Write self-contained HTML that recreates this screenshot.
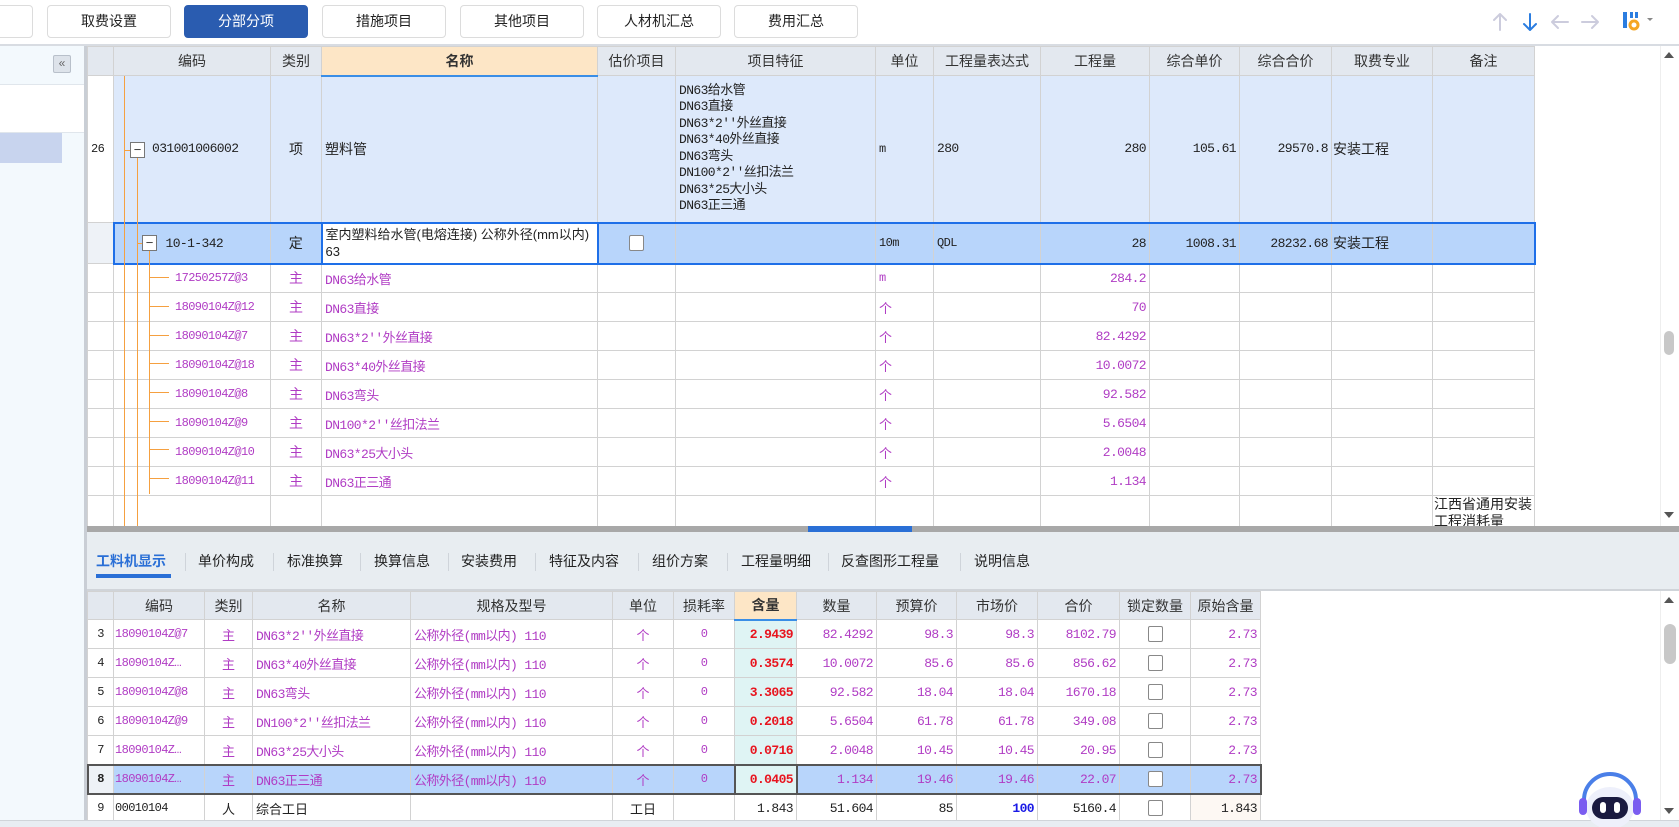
<!DOCTYPE html>
<html><head><meta charset="utf-8"><style>
*{box-sizing:border-box;margin:0;padding:0}
body{width:1679px;height:827px;overflow:hidden;background:#fff;font-family:"Liberation Sans","Noto Sans CJK SC",sans-serif;font-size:13px;color:#222;position:relative}
.abs{position:absolute}
.btn{position:absolute;top:5px;height:33px;border:1px solid #dcdcdc;border-radius:4px;background:#fff;text-align:center;line-height:31px;font-size:14px;color:#222}
.btn.on{background:#2a5cb0;color:#fff;border-color:#2a5cb0}
table{border-collapse:collapse;table-layout:fixed;position:absolute}
td,th{border:1px solid #d2d2d2;overflow:hidden;white-space:nowrap;font-weight:normal;padding:0 3px}
th{background:#e3e8ef;font-size:14px;text-align:center;color:#333}
.m{font-family:"Liberation Mono","Noto Sans CJK SC",monospace;font-size:12px;letter-spacing:-0.6px}
.r{text-align:right}.c{text-align:center}
.p{color:#b03cc4}
.t1 td{height:29px}
.tab{position:absolute;top:551px;font-size:14px;color:#222}
.sep{position:absolute;top:553px;width:1px;height:18px;background:#cfd4da}
.cb{display:inline-block;width:15px;height:16px;border:1px solid #888;border-radius:2px;background:#fff;vertical-align:middle}
.cc{padding-left:61px}
</style></head><body>
<div class="btn" style="left:-10px;width:43px"></div>
<div class="btn" style="left:47px;width:124px">取费设置</div>
<div class="btn on" style="left:184px;width:124px">分部分项</div>
<div class="btn" style="left:322px;width:124px">措施项目</div>
<div class="btn" style="left:460px;width:124px">其他项目</div>
<div class="btn" style="left:597px;width:124px">人材机汇总</div>
<div class="btn" style="left:734px;width:124px">费用汇总</div>
<svg class="abs" style="left:1490px;top:8px" width="180" height="28" viewBox="0 0 180 28">
<g fill="none" stroke-width="2" stroke-linecap="round" stroke-linejoin="round">
<path d="M10 6v16M4 12l6-6 6 6" stroke="#ccd"/>
<path d="M40 6v16M34 16l6 6 6-6" stroke="#2b7de0"/>
<path d="M62 14h16M68 8l-6 6 6 6" stroke="#ccd"/>
<path d="M92 14h16M102 8l6 6-6 6" stroke="#ccd"/>
</g>
<rect x="133" y="4" width="4" height="16" fill="#2b7de0"/><rect x="140" y="4" width="3" height="6" fill="#2b7de0"/><rect x="145" y="4" width="3" height="6" fill="#2b7de0"/>
<circle cx="144" cy="17" r="4" fill="none" stroke="#f5a623" stroke-width="3"/>
<path d="M157 10l3 3 3-3z" fill="#888"/>
</svg>
<div class="abs" style="left:0;top:44px;width:1679px;height:2px;background:#d8dce2"></div>
<div class="abs" style="left:0;top:46px;width:84px;height:780px;background:#f3f9fd"></div>
<div class="abs" style="left:0;top:84px;width:84px;height:49px;background:#fff;border-top:1px solid #e0e6ec;border-bottom:1px solid #e0e6ec"></div>
<div class="abs" style="left:0;top:133px;width:62px;height:30px;background:#c8d4ee"></div>
<div class="abs" style="left:53px;top:55px;width:18px;height:18px;background:#dde3ea;border:1px solid #b8c0ca;border-radius:2px;font-size:12px;line-height:15px;text-align:center;color:#666">«</div>
<div class="abs" style="left:84px;top:46px;width:3px;height:780px;background:#c9ced5"></div>
<div class="abs" style="left:87px;top:46px;width:1573px;height:480px;overflow:hidden">
<table style="left:0;top:0;width:1447px" class="t1">
<colgroup><col style="width:26px"><col style="width:157px"><col style="width:51px"><col style="width:276px"><col style="width:78px"><col style="width:200px"><col style="width:58px"><col style="width:107px"><col style="width:109px"><col style="width:90px"><col style="width:92px"><col style="width:101px"><col style="width:102px"></colgroup>
<tr style="height:29px"><th></th><th>编码</th><th>类别</th><th style="background:#fde6c6;border-bottom:2px solid #3a8ee6;font-weight:bold">名称</th><th>估价项目</th><th>项目特征</th><th>单位</th><th>工程量表达式</th><th>工程量</th><th>综合单价</th><th>综合合价</th><th>取费专业</th><th>备注</th></tr>
<tr style="background:#dde9fb"><td style="height:147px;background:#fff" class="m">26</td><td class="m" style="padding-left:38px;font-size:13px">031001006002</td><td class="c" style="font-size:14px">项</td><td style="font-size:14px">塑料管</td><td></td><td class="m" style="line-height:16.5px;white-space:normal;font-size:13px">DN63给水管<br>DN63直接<br>DN63*2''外丝直接<br>DN63*40外丝直接<br>DN63弯头<br>DN100*2''丝扣法兰<br>DN63*25大小头<br>DN63正三通</td><td class="m">m</td><td class="m" style="font-size:13px">280</td><td class="m r" style="font-size:13px">280</td><td class="m r" style="font-size:13px">105.61</td><td class="m r" style="font-size:13px">29570.8</td><td style="font-size:14px;padding-left:1px">安装工程</td><td></td></tr>
<tr style="background:#b8d5fb"><td style="height:41px;background:#eef2f7"></td><td class="m" style="padding-left:51px;font-size:13px;border-left:2px solid #1e6fe8;border-top:2px solid #1e6fe8;border-bottom:2px solid #1e6fe8">10-1-342</td><td class="c" style="font-size:14px;border-top:2px solid #1e6fe8;border-bottom:2px solid #1e6fe8">定</td><td style="background:#fff;white-space:normal;word-break:break-all;line-height:17px;font-size:13px;border:2px solid #1e6fe8">室内塑料给水管(电熔连接) 公称外径(mm以内) 63</td><td class="c" style="border-top:2px solid #1e6fe8;border-bottom:2px solid #1e6fe8"><span class="cb"></span></td><td style="border-top:2px solid #1e6fe8;border-bottom:2px solid #1e6fe8"></td><td class="m" style="border-top:2px solid #1e6fe8;border-bottom:2px solid #1e6fe8">10m</td><td class="m" style="border-top:2px solid #1e6fe8;border-bottom:2px solid #1e6fe8">QDL</td><td class="m r" style="font-size:13px;border-top:2px solid #1e6fe8;border-bottom:2px solid #1e6fe8">28</td><td class="m r" style="font-size:13px;border-top:2px solid #1e6fe8;border-bottom:2px solid #1e6fe8">1008.31</td><td class="m r" style="font-size:13px;border-top:2px solid #1e6fe8;border-bottom:2px solid #1e6fe8">28232.68</td><td style="font-size:14px;padding-left:1px;border-top:2px solid #1e6fe8;border-bottom:2px solid #1e6fe8">安装工程</td><td style="border:2px solid #1e6fe8;border-left:1px solid #d2d2d2"></td></tr>
<tr class="p"><td></td><td class="m cc">17250257Z@3</td><td class="c" style="font-size:14px">主</td><td class="m" style="font-size:13px">DN63给水管</td><td></td><td></td><td class="m">m</td><td></td><td class="m r" style="font-size:13px">284.2</td><td></td><td></td><td></td><td></td></tr>
<tr class="p"><td></td><td class="m cc">18090104Z@12</td><td class="c" style="font-size:14px">主</td><td class="m" style="font-size:13px">DN63直接</td><td></td><td></td><td>个</td><td></td><td class="m r" style="font-size:13px">70</td><td></td><td></td><td></td><td></td></tr>
<tr class="p"><td></td><td class="m cc">18090104Z@7</td><td class="c" style="font-size:14px">主</td><td class="m" style="font-size:13px">DN63*2''外丝直接</td><td></td><td></td><td>个</td><td></td><td class="m r" style="font-size:13px">82.4292</td><td></td><td></td><td></td><td></td></tr>
<tr class="p"><td></td><td class="m cc">18090104Z@18</td><td class="c" style="font-size:14px">主</td><td class="m" style="font-size:13px">DN63*40外丝直接</td><td></td><td></td><td>个</td><td></td><td class="m r" style="font-size:13px">10.0072</td><td></td><td></td><td></td><td></td></tr>
<tr class="p"><td></td><td class="m cc">18090104Z@8</td><td class="c" style="font-size:14px">主</td><td class="m" style="font-size:13px">DN63弯头</td><td></td><td></td><td>个</td><td></td><td class="m r" style="font-size:13px">92.582</td><td></td><td></td><td></td><td></td></tr>
<tr class="p"><td></td><td class="m cc">18090104Z@9</td><td class="c" style="font-size:14px">主</td><td class="m" style="font-size:13px">DN100*2''丝扣法兰</td><td></td><td></td><td>个</td><td></td><td class="m r" style="font-size:13px">5.6504</td><td></td><td></td><td></td><td></td></tr>
<tr class="p"><td></td><td class="m cc">18090104Z@10</td><td class="c" style="font-size:14px">主</td><td class="m" style="font-size:13px">DN63*25大小头</td><td></td><td></td><td>个</td><td></td><td class="m r" style="font-size:13px">2.0048</td><td></td><td></td><td></td><td></td></tr>
<tr class="p"><td></td><td class="m cc">18090104Z@11</td><td class="c" style="font-size:14px">主</td><td class="m" style="font-size:13px">DN63正三通</td><td></td><td></td><td>个</td><td></td><td class="m r" style="font-size:13px">1.134</td><td></td><td></td><td></td><td></td></tr>
<tr><td style="height:40px"></td><td></td><td></td><td></td><td></td><td></td><td></td><td></td><td></td><td></td><td></td><td></td><td style="white-space:normal;line-height:17px;font-size:14px;vertical-align:top;padding:0 1px">江西省通用安装工程消耗量</td></tr>
</table>
<div class="abs" style="left:37px;top:30px;width:1px;height:450px;background:#f5a040"></div>
<div class="abs" style="left:37px;top:104px;width:8px;height:1px;background:#f5a040"></div>
<div class="abs" style="left:50px;top:110px;width:1px;height:370px;background:#f5a040"></div>
<div class="abs" style="left:50px;top:197px;width:6px;height:1px;background:#f5a040"></div>
<div class="abs" style="left:62px;top:204px;width:1px;height:244px;background:#f5a040"></div>
<div class="abs" style="left:43px;top:96px;width:15px;height:16px;border:1px solid #777;background:#fff;font-size:13px;line-height:13px;text-align:center;color:#333">−</div>
<div class="abs" style="left:55px;top:189px;width:15px;height:16px;border:1px solid #777;background:#fff;font-size:13px;line-height:13px;text-align:center;color:#333">−</div>
<div class="abs" style="left:62px;top:231px;width:20px;height:1px;background:#f5a040;box-shadow:0 29px #f5a040,0 58px #f5a040,0 86px #f5a040,0 115px #f5a040,0 144px #f5a040,0 172px #f5a040,0 201px #f5a040"></div>
</div>
<div class="abs" style="left:1660px;top:46px;width:19px;height:480px;background:#fff;border-left:1px solid #eee"></div>
<div class="abs" style="left:1664px;top:52px;width:0;height:0;border:5px solid transparent;border-bottom:6px solid #555;border-top:0"></div>
<div class="abs" style="left:1664px;top:512px;width:0;height:0;border:5px solid transparent;border-top:6px solid #555;border-bottom:0"></div>
<div class="abs" style="left:1664px;top:331px;width:10px;height:24px;background:#c8c8c8;border-radius:5px"></div>
<div class="abs" style="left:87px;top:526px;width:1592px;height:6px;background:#a8a8a8"></div>
<div class="abs" style="left:808px;top:526px;width:104px;height:6px;background:#2a6fd6"></div>
<div class="abs" style="left:87px;top:532px;width:1592px;height:58px;background:#e8edf1"></div>
<div class="tab" style="left:96px;color:#2a6fd6;font-weight:bold">工料机显示</div>
<div class="abs" style="left:96px;top:574px;width:75px;height:4px;background:#2a6fd6"></div>
<div class="sep" style="left:185px"></div><div class="tab" style="left:198px">单价构成</div>
<div class="sep" style="left:273px"></div><div class="tab" style="left:287px">标准换算</div>
<div class="sep" style="left:360px"></div><div class="tab" style="left:374px">换算信息</div>
<div class="sep" style="left:448px"></div><div class="tab" style="left:461px">安装费用</div>
<div class="sep" style="left:535px"></div><div class="tab" style="left:549px">特征及内容</div>
<div class="sep" style="left:638px"></div><div class="tab" style="left:652px">组价方案</div>
<div class="sep" style="left:727px"></div><div class="tab" style="left:741px">工程量明细</div>
<div class="sep" style="left:828px"></div><div class="tab" style="left:841px">反查图形工程量</div>
<div class="sep" style="left:960px"></div><div class="tab" style="left:974px">说明信息</div>
<div class="abs" style="left:87px;top:589px;width:1592px;height:2px;background:#d0d4d9"></div>
<div class="abs" style="left:87px;top:591px;width:1573px;height:230px;overflow:hidden">
<table style="left:0;top:0;width:1173px" class="t1">
<colgroup><col style="width:26px"><col style="width:91px"><col style="width:48px"><col style="width:158px"><col style="width:202px"><col style="width:61px"><col style="width:61px"><col style="width:62px"><col style="width:80px"><col style="width:80px"><col style="width:81px"><col style="width:82px"><col style="width:71px"><col style="width:70px"></colgroup>
<tr style="height:28px"><th></th><th>编码</th><th>类别</th><th>名称</th><th>规格及型号</th><th>单位</th><th>损耗率</th><th style="background:#fde6c6;border-bottom:2px solid #3a8ee6;font-weight:bold">含量</th><th>数量</th><th>预算价</th><th>市场价</th><th>合价</th><th>锁定数量</th><th>原始含量</th></tr>
<tr class="p"><td class="m c" style="color:#222">3</td><td class="m" style="padding:0 1px">18090104Z@7</td><td class="c">主</td><td class="m" style="font-size:13px">DN63*2''外丝直接</td><td class="m" style="font-size:13px">公称外径(mm以内) 110</td><td class="c">个</td><td class="c m">0</td><td class="m r" style="background:#dff4f4;color:#e8141e;font-weight:bold;font-size:13px">2.9439</td><td class="m r" style="font-size:13px">82.4292</td><td class="m r" style="font-size:13px">98.3</td><td class="m r" style="font-size:13px">98.3</td><td class="m r" style="font-size:13px">8102.79</td><td class="c"><span class="cb"></span></td><td class="m r" style="font-size:13px">2.73</td></tr>
<tr class="p"><td class="m c" style="color:#222">4</td><td class="m" style="padding:0 1px">18090104Z…</td><td class="c">主</td><td class="m" style="font-size:13px">DN63*40外丝直接</td><td class="m" style="font-size:13px">公称外径(mm以内) 110</td><td class="c">个</td><td class="c m">0</td><td class="m r" style="background:#dff4f4;color:#e8141e;font-weight:bold;font-size:13px">0.3574</td><td class="m r" style="font-size:13px">10.0072</td><td class="m r" style="font-size:13px">85.6</td><td class="m r" style="font-size:13px">85.6</td><td class="m r" style="font-size:13px">856.62</td><td class="c"><span class="cb"></span></td><td class="m r" style="font-size:13px">2.73</td></tr>
<tr class="p"><td class="m c" style="color:#222">5</td><td class="m" style="padding:0 1px">18090104Z@8</td><td class="c">主</td><td class="m" style="font-size:13px">DN63弯头</td><td class="m" style="font-size:13px">公称外径(mm以内) 110</td><td class="c">个</td><td class="c m">0</td><td class="m r" style="background:#dff4f4;color:#e8141e;font-weight:bold;font-size:13px">3.3065</td><td class="m r" style="font-size:13px">92.582</td><td class="m r" style="font-size:13px">18.04</td><td class="m r" style="font-size:13px">18.04</td><td class="m r" style="font-size:13px">1670.18</td><td class="c"><span class="cb"></span></td><td class="m r" style="font-size:13px">2.73</td></tr>
<tr class="p"><td class="m c" style="color:#222">6</td><td class="m" style="padding:0 1px">18090104Z@9</td><td class="c">主</td><td class="m" style="font-size:13px">DN100*2''丝扣法兰</td><td class="m" style="font-size:13px">公称外径(mm以内) 110</td><td class="c">个</td><td class="c m">0</td><td class="m r" style="background:#dff4f4;color:#e8141e;font-weight:bold;font-size:13px">0.2018</td><td class="m r" style="font-size:13px">5.6504</td><td class="m r" style="font-size:13px">61.78</td><td class="m r" style="font-size:13px">61.78</td><td class="m r" style="font-size:13px">349.08</td><td class="c"><span class="cb"></span></td><td class="m r" style="font-size:13px">2.73</td></tr>
<tr class="p"><td class="m c" style="color:#222">7</td><td class="m" style="padding:0 1px">18090104Z…</td><td class="c">主</td><td class="m" style="font-size:13px">DN63*25大小头</td><td class="m" style="font-size:13px">公称外径(mm以内) 110</td><td class="c">个</td><td class="c m">0</td><td class="m r" style="background:#dff4f4;color:#e8141e;font-weight:bold;font-size:13px">0.0716</td><td class="m r" style="font-size:13px">2.0048</td><td class="m r" style="font-size:13px">10.45</td><td class="m r" style="font-size:13px">10.45</td><td class="m r" style="font-size:13px">20.95</td><td class="c"><span class="cb"></span></td><td class="m r" style="font-size:13px">2.73</td></tr>
<tr class="p" style="background:#b8d5fb;outline:2px solid #555;outline-offset:-1px"><td class="m c" style="color:#222;font-weight:bold;background:#eef2f7">8</td><td class="m" style="padding:0 1px">18090104Z…</td><td class="c">主</td><td class="m" style="font-size:13px">DN63正三通</td><td class="m" style="font-size:13px">公称外径(mm以内) 110</td><td class="c">个</td><td class="c m">0</td><td class="m r" style="background:#dff4f4;color:#e8141e;font-weight:bold;font-size:13px;outline:2px solid #555;outline-offset:-1px">0.0405</td><td class="m r" style="font-size:13px">1.134</td><td class="m r" style="font-size:13px">19.46</td><td class="m r" style="font-size:13px">19.46</td><td class="m r" style="font-size:13px">22.07</td><td class="c"><span class="cb"></span></td><td class="m r" style="font-size:13px">2.73</td></tr>
<tr><td class="m c">9</td><td class="m" style="padding:0 1px">00010104</td><td class="c">人</td><td>综合工日</td><td></td><td class="c">工日</td><td></td><td class="m r" style="font-size:13px">1.843</td><td class="m r" style="font-size:13px">51.604</td><td class="m r" style="font-size:13px">85</td><td class="m r" style="color:#1a1ae6;font-weight:bold;font-size:13px">100</td><td class="m r" style="font-size:13px">5160.4</td><td class="c"><span class="cb"></span></td><td class="m r" style="background:#fdf8f3;font-size:13px">1.843</td></tr>
</table>
</div>
<div class="abs" style="left:1660px;top:591px;width:19px;height:230px;background:#fff;border-left:1px solid #eee"></div>
<div class="abs" style="left:1664px;top:597px;width:0;height:0;border:5px solid transparent;border-bottom:6px solid #555;border-top:0"></div>
<div class="abs" style="left:1664px;top:808px;width:0;height:0;border:5px solid transparent;border-top:6px solid #555;border-bottom:0"></div>
<div class="abs" style="left:1664px;top:624px;width:12px;height:40px;background:#c8c8c8;border-radius:6px"></div>
<div class="abs" style="left:0;top:820px;width:1679px;height:7px;background:#e8edf2;border-top:1px solid #d0d4d9"></div>
<svg class="abs" style="left:1570px;top:766px" width="80" height="61" viewBox="0 0 80 61">
<path d="M14 34a26 26 0 0 1 52 0" fill="none" stroke="#4a7fe8" stroke-width="4"/>
<ellipse cx="40" cy="42" rx="24" ry="21" fill="#eef0fb"/>
<rect x="22" y="31" width="36" height="22" rx="11" fill="#1a1a40"/>
<rect x="30" y="36" width="6" height="11" rx="3" fill="#fff"/><rect x="44" y="36" width="6" height="11" rx="3" fill="#fff"/>
<rect x="9" y="32" width="8" height="17" rx="4" fill="#7a5cf0"/><rect x="63" y="32" width="8" height="17" rx="4" fill="#7a5cf0"/>
</svg>
</body></html>
